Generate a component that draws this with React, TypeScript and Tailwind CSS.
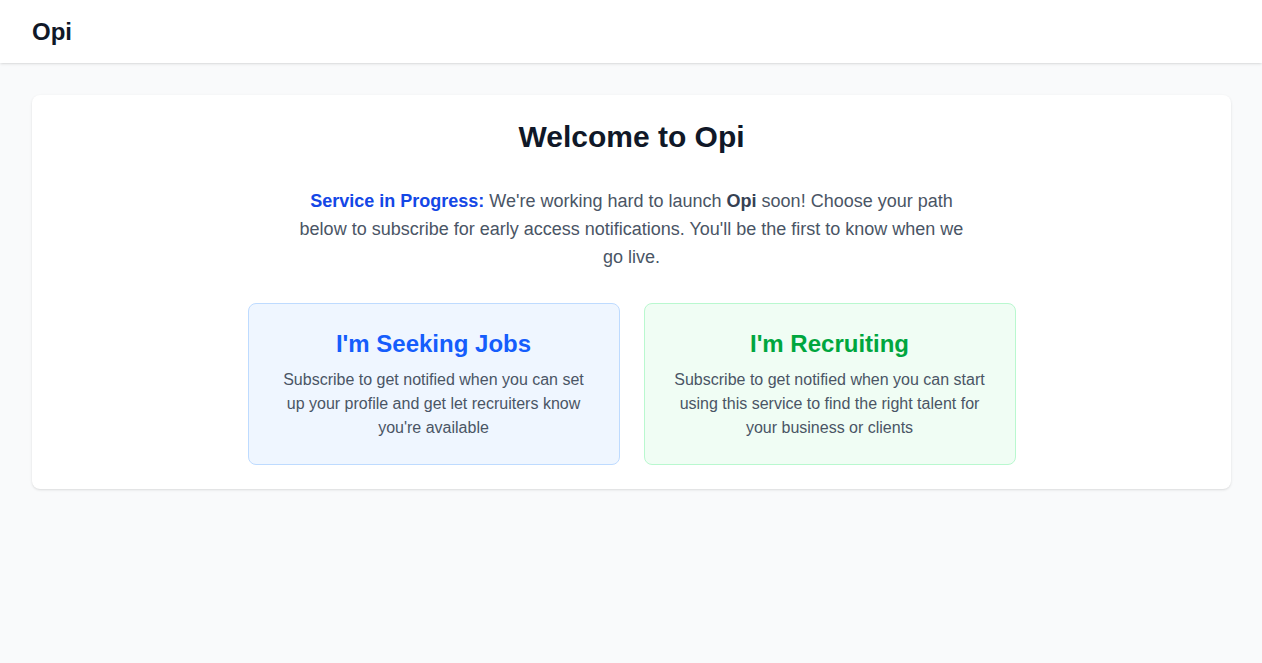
export default function App() {
  return (
    <div className="min-h-screen bg-gray-50 font-['Liberation_Sans',Arial,sans-serif]">
      <header className="bg-white shadow-sm px-8 py-4">
        <h1 className="text-2xl leading-[31px] font-bold text-gray-900">Opi</h1>
      </header>

      <main className="pl-8 pr-[31px] py-8">
        <div className="bg-white rounded-lg shadow p-6">
          <h2 className="text-3xl font-bold text-gray-900 text-center mb-8">Welcome to Opi</h2>

          <p className="max-w-2xl mx-auto text-center text-lg text-gray-600 mb-8">
            <span className="font-bold text-blue-700">Service in Progress:</span> We're working hard to
            launch <span className="font-bold text-gray-700">Opi</span> soon! Choose your path below to
            subscribe for early access notifications. You'll be the first to know when we go live.
          </p>

          <div className="max-w-3xl mx-auto grid grid-cols-2 gap-6">
            <div className="bg-blue-50 border border-blue-200 rounded-lg p-6 text-center">
              <h3 className="text-2xl font-bold text-blue-600 mb-2">I'm Seeking Jobs</h3>
              <p className="text-gray-600">
                Subscribe to get notified when you can set up your profile and get let recruiters know
                you're available
              </p>
            </div>

            <div className="bg-green-50 border border-green-200 rounded-lg p-6 text-center">
              <h3 className="text-2xl font-bold text-green-600 mb-2">I'm Recruiting</h3>
              <p className="text-gray-600">
                Subscribe to get notified when you can start using this service to find the right talent
                for your business or clients
              </p>
            </div>
          </div>
        </div>
      </main>
    </div>
  )
}
